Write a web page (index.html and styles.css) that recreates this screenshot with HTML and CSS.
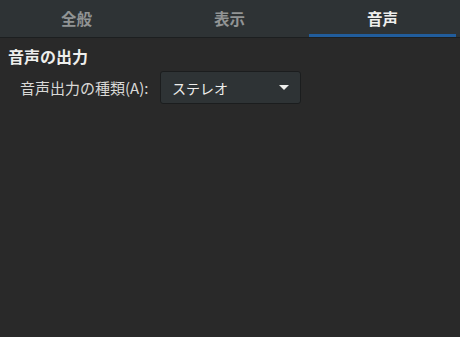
FILE: index.html
```html
<!DOCTYPE html>
<html lang="ja">
<head>
    <meta charset="UTF-8">
    <title>設定</title>
    <link rel="stylesheet" href="styles.css">
</head>
<body>
    <div class="tabs">
        <div class="tab">全般</div>
        <div class="tab">表示</div>
        <div class="tab active">音声</div>
    </div>
    <div class="page">
        <h2 class="section">音声の出力</h2>
        <div class="row">
            <span class="label">音声出力の種類(A):</span>
            <div class="combo">
                <span>ステレオ</span>
                <span class="arrow"></span>
            </div>
        </div>
    </div>
</body>
</html>
```
FILE: styles.css
```css
html, body { margin: 0; height: 100%; }
body { background: #292929; color: #eeeeec; font-family: "Noto Sans CJK JP", "Noto Sans", sans-serif; font-size: 15px; }
.tabs { display: flex; height: 37px; background: #2e3335; border-bottom: 1px solid #1c1f20; padding: 0 1px 0 0; }
.tab { flex: 1; margin: 0 3px; display: flex; align-items: center; justify-content: center; font-size: 15.5px; font-weight: bold; color: #919494; border-bottom: 3px solid transparent; padding-top: 2px; box-sizing: border-box; }
.tab.active { color: #eeeeec; border-bottom-color: #215d9c; }
.page { padding: 7px 8px; }
.section { margin: 0; font-size: 16px; font-weight: bold; line-height: 22px; }
.row { display: flex; align-items: center; margin-top: 4px; padding-left: 12px; }
.label { width: 140px; color: #d9d9d7; }
.combo { width: 141px; height: 33px; box-sizing: border-box; border: 1px solid #1b1d1e; border-radius: 3px; background: #2e3335; display: flex; align-items: center; justify-content: space-between; padding: 0 11px 0 11px; font-size: 14px; color: #eeeeec; }
.arrow { width: 0; height: 0; border-left: 5px solid transparent; border-right: 5px solid transparent; border-top: 5px solid #eeeeec; }
```
